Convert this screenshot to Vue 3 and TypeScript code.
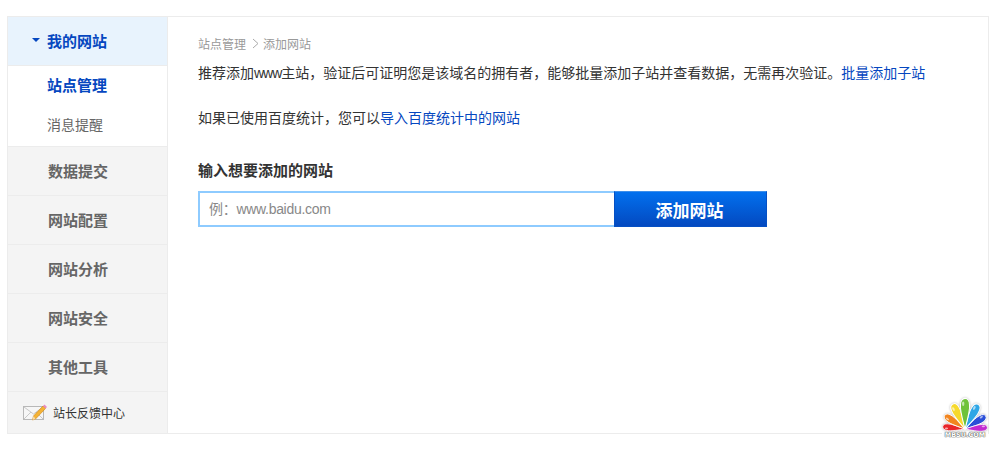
<template>
  <div class="page">
    <div class="frame">
      <aside class="side">
        <div class="side-head">
          <i class="caret"></i>
          <span>我的网站</span>
        </div>
        <ul class="sub-list">
          <li class="sub-item active">站点管理</li>
          <li class="sub-item">消息提醒</li>
        </ul>
        <div v-for="item in menuItems" :key="item" class="side-item">{{ item }}</div>
        <div class="feedback">
          <svg class="mail" width="24" height="18" viewBox="0 0 24 18">
            <rect x="0.500" y="3.500" width="20" height="13" fill="#f6f6f6" stroke="#b8b8b8" />
            <path d="M1 4l9.500 7L20 4M1 16l7-7M20 16l-7-7" fill="none" stroke="#c8c8c8" />
            <path d="M9.500 17l1-4L20 3l2.500 2.500L12.500 16z" fill="#f5b335" stroke="#c98212" stroke-width="0.600" />
            <path d="M20 3l1.500-1.500 2.500 2.500-1.500 1.500z" fill="#e88bc0" />
            <path d="M9.500 17l1-4 2 3z" fill="#f6dcb0" />
          </svg>
          <span>站长反馈中心</span>
        </div>
      </aside>

      <main class="content">
        <div class="crumb">
          <span>站点管理</span>
          <svg class="crumb-sep" width="7" height="11" viewBox="0 0 7 11">
            <path d="M1 1l5 4.500-5 4.500" fill="none" stroke="#aaa" />
          </svg>
          <span>添加网站</span>
        </div>
        <p class="intro">推荐添加<span class="www">www</span>主站，验证后可证明您是该域名的拥有者，能够批量添加子站并查看数据，无需再次验证。<a>批量添加子站</a></p>
        <p class="import">如果已使用百度统计，您可以<a>导入百度统计中的网站</a></p>
        <h3 class="form-title">输入想要添加的网站</h3>
        <div class="form-row">
          <input v-model="site" class="site-input" type="text" placeholder="例：www.baidu.com" />
          <button class="add-btn">添加网站</button>
        </div>
      </main>

      <div class="logo">
        <svg width="46" height="38" viewBox="0 0 46 38">
          <g v-for="petal in petals" :key="petal.color" :transform="`rotate(${petal.angle} 23 36) translate(23 36) scale(${petal.size}) translate(-23 -36)`">
            <path d="M23 36C21 28 17 15 18 9c0-4 2-7 5-7s5 3 5 7c1 6-3 19-5 27z" :fill="petal.color" stroke="#fff" stroke-width="1.200" />
            <ellipse cx="21" cy="8" rx="1.300" ry="2.500" fill="#fff" opacity="0.600" />
          </g>
        </svg>
        <span>MBSU.COM</span>
      </div>
    </div>
  </div>
</template>

<script setup lang="ts">
import { ref } from 'vue'

const site = ref<string>('')
const menuItems: string[] = ['数据提交', '网站配置', '网站分析', '网站安全', '其他工具']
const petals: { color: string; angle: number; size: number }[] = [
  { color: '#e8262a', angle: -84, size: 0.66 },
  { color: '#f2851f', angle: -56, size: 0.72 },
  { color: '#f6d92c', angle: -26, size: 0.82 },
  { color: '#2b4fd8', angle: 58, size: 0.72 },
  { color: '#c22bd0', angle: 86, size: 0.66 },
  { color: '#2fa6e6', angle: 28, size: 0.82 },
  { color: '#6fc23a', angle: 0, size: 0.9 }
]
</script>

<style>
html,
body {
  margin: 0;
  background: #fff;
}
</style>

<style scoped>
.page {
  width: 999px;
  height: 449px;
  padding: 16px 10px 0 7px;
  box-sizing: border-box;
  font-family: "Liberation Sans", "Noto Sans CJK SC", sans-serif;
  overflow: hidden;
}

.frame {
  position: relative;
  display: flex;
  width: 982px;
  height: 418px;
  box-sizing: border-box;
  border: 1px solid #ececec;
  background: #fff;
}

.side {
  width: 159px;
  flex-shrink: 0;
  border-right: 1px solid #ececec;
  background: #f4f4f4;
}

.side-head {
  display: flex;
  align-items: center;
  height: 48px;
  padding: 0 0 2px 24px;
  box-sizing: border-box;
  background: #e8f3fd;
  color: #0547c0;
  font-size: 15px;
  font-weight: 700;
}

.caret {
  width: 0;
  height: 0;
  margin-right: 7px;
  border: 4px solid transparent;
  border-top: 4px solid #0547c0;
  border-bottom: 0;
}

.sub-list {
  height: 80px;
  margin: 0;
  padding: 0;
  border-top: 1px solid #ececec;
  list-style: none;
  background: #fff;
}

.sub-item {
  height: 40px;
  padding-left: 39px;
  color: #666;
  font-size: 14px;
  line-height: 38px;
}

.sub-item.active {
  color: #0547c0;
  font-size: 15px;
  font-weight: 700;
  line-height: 40px;
}

.side-item {
  height: 48px;
  padding-left: 40px;
  border-top: 1px solid #ececec;
  color: #666;
  font-size: 15px;
  font-weight: 700;
  line-height: 50px;
}

.feedback {
  display: flex;
  align-items: center;
  height: 41px;
  padding-left: 15px;
  box-sizing: border-box;
  border-top: 1px solid #ececec;
  color: #333;
  font-size: 12px;
}

.mail {
  margin-right: 6px;
}

.content {
  flex: 1;
  padding: 18px 0 0 30px;
  color: #333;
  font-size: 14px;
}

.crumb {
  display: flex;
  align-items: center;
  height: 16px;
  color: #999;
  font-size: 12px;
}

.crumb-sep {
  margin: 0 4px 0 6px;
}

.intro,
.import {
  margin: 0;
  line-height: 20px;
}

.www {
  letter-spacing: -1px;
}

.intro {
  margin-top: 12px;
}

.import {
  margin-top: 25px;
}

a {
  color: #0547c0;
  cursor: pointer;
}

.form-title {
  margin: 33px 0 10px;
  color: #333;
  font-size: 15px;
  font-weight: 700;
  line-height: 20px;
}

.form-row {
  display: flex;
  height: 36px;
}

.site-input {
  width: 416px;
  height: 36px;
  padding: 0 9px;
  box-sizing: border-box;
  border: 2px solid #8ecbff;
  border-right: 0;
  outline: none;
  color: #333;
  font-family: inherit;
  font-size: 14px;
}

.site-input::placeholder {
  color: #888;
  letter-spacing: -0.3px;
  opacity: 1;
}

.add-btn {
  width: 153px;
  height: 36px;
  padding: 0 2px 0 0;
  border: 1px solid #0550c4;
  border-top-color: #3d8eea;
  background: linear-gradient(#0270ee, #0349c0);
  color: #fff;
  font-family: inherit;
  font-size: 17px;
  font-weight: 700;
  cursor: pointer;
}

.logo {
  position: absolute;
  right: 0;
  bottom: -6px;
  display: flex;
  flex-direction: column;
  align-items: center;
  width: 46px;
  color: #fff;
  font-family: "DejaVu Sans", sans-serif;
  font-size: 6.500px;
  font-weight: 700;
  line-height: 8px;
}

.logo svg {
  display: block;
  filter: drop-shadow(0 0 1px #bbb);
}

.logo span {
  width: 100%;
  background: #fff;
  text-align: center;
  white-space: nowrap;
  text-shadow: 0 0 1px #555, 0 0 1px #555, 0 0 1px #555;
}
</style>
